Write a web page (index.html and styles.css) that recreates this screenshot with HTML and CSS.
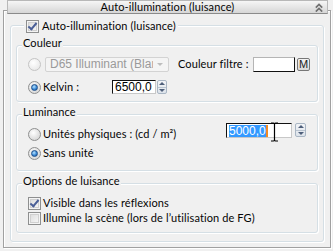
FILE: index.html
```html
<!DOCTYPE html>
<html lang="fr">

<head>
    <meta charset="UTF-8">
    <title>Auto-illumination (luisance)</title>
    <link rel="stylesheet" href="styles.css">
</head>

<body>
    <div class="rollout">
        <div class="rollout-title">
            <span>Auto-illumination (luisance)</span>
            <svg class="chevron" width="8" height="9" viewBox="0 0 8 9">
                <path d="M0.8 4.6 L4 1.4 L7.2 4.6 M0.8 8.6 L4 5.4 L7.2 8.6" fill="none" stroke="#707070" stroke-width="1.7"/>
            </svg>
        </div>

        <div class="group group-main">
            <div class="group-label label-main">
                <span class="check on"></span>
                <span class="check-text">Auto-illumination (luisance)</span>
            </div>

            <!-- Couleur -->
            <div class="group group-color">
                <div class="group-label">Couleur</div>
                <div class="row row-first">
                    <span class="radio off"></span>
                    <div class="combo">
                        <span class="combo-text">D65 Illuminant (Blanc</span>
                        <span class="combo-arrow"></span>
                    </div>
                    <span class="filter-label">Couleur filtre :</span>
                    <span class="swatch"></span>
                    <span class="m-button">M</span>
                </div>
                <div class="row row-kelvin">
                    <span class="radio on"></span>
                    <span class="kelvin-label">Kelvin :</span>
                    <span class="field field-kelvin">6500,0</span>
                    <span class="spinner"><span class="spin-up"></span><span class="spin-down"></span></span>
                </div>
            </div>

            <!-- Luminance -->
            <div class="group group-lum">
                <div class="group-label">Luminance</div>
                <div class="row row-phys">
                    <span class="radio"></span>
                    <span class="phys-label">Unités physiques : (cd / m²)</span>
                    <span class="field field-lum">
                        <span class="selected">5000,0</span>
                        <svg class="ibeam" width="9" height="20" viewBox="0 0 9 20">
                            <path d="M1 1 H3.5 Q4.5 1 4.5 2.5 V17.5 Q4.5 19 3.5 19 H1 M8 1 H5.5 Q4.5 1 4.5 2.5 M4.5 17.5 Q4.5 19 5.5 19 H8" fill="none" stroke="#000" stroke-width="1.2"/>
                        </svg>
                    </span>
                    <span class="spinner spinner-lum"><span class="spin-up"></span><span class="spin-down"></span></span>
                </div>
                <div class="row row-sans">
                    <span class="radio on"></span>
                    <span>Sans unité</span>
                </div>
            </div>

            <!-- Options de luisance -->
            <div class="group group-opts">
                <div class="group-label">Options de luisance</div>
                <div class="row row-check1">
                    <span class="check on"></span>
                    <span>Visible dans les réflexions</span>
                </div>
                <div class="row row-check2">
                    <span class="check"></span>
                    <span>Illumine la scène (lors de l’utilisation de FG)</span>
                </div>
            </div>
        </div>
    </div>
</body>

</html>
```

FILE: styles.css
```css
body {
    margin: 0;
    width: 333px;
    height: 251px;
    overflow: hidden;
    background: #f0f0f0;
    font-family: Lato, "Liberation Sans", sans-serif;
    font-size: 11px;
    letter-spacing: 0.1px;
    line-height: 14px;
    color: #050505;
}

/* outer rollout frame */
.rollout {
    margin: 10px 2px 0 3px;
    height: 238px;
    box-sizing: border-box;
    border: 1px solid #a0a0a0;
    box-shadow: inset 1px 1px 0 #fff, 1px 1px 0 #fff;
}

.rollout-title {
    display: flex;
    align-items: center;
    justify-content: center;
    position: relative;
    height: 14px;
    margin: -11px 2px 0 3px;
    box-sizing: border-box;
    border: 1px solid #b8b8b8;
    border-bottom-color: #8a8a8a;
    background: linear-gradient(#f6f6f6, #d6d6d6);
}

.rollout-title .chevron {
    position: absolute;
    right: 4px;
    top: 2px;
}

/* group boxes */
.group {
    border: 1px solid #d5dfe5;
    border-radius: 3px;
    box-shadow: inset 1px 1px 0 #fff, 1px 1px 0 #fff;
}

.group-label {
    display: flex;
    align-items: center;
    width: max-content;
    height: 14px;
    margin: -10px 0 0 5px;
    padding: 0 1px;
    background: #f0f0f0;
}

.group-main {
    margin: 11px 6px 0 6px;
    padding: 0 5px 8px 5px;
}

.label-main {
    margin: -7px 0 0 8px;
    padding: 0 2px;
}

.check-text {
    margin-left: 3px;
}

.group-color {
    margin-top: 12px;
    padding-bottom: 5px;
}

.group-lum {
    margin-top: 12px;
    padding-bottom: 10px;
}

.group-opts {
    margin-top: 12px;
    padding-bottom: 7px;
}

.row {
    display: flex;
    align-items: center;
    padding-left: 11px;
    height: 18px;
}

.row .radio,
.row .check {
    margin-right: 2px;
}

.row-first {
    margin-top: 5px;
}

.row-kelvin {
    margin-top: 5px;
}

.row-phys {
    align-items: flex-start;
    margin-top: 4px;
}

.row-phys .radio {
    margin-top: 5px;
}

.row-phys .phys-label {
    margin-top: 4px;
}

.row-sans {
    height: 14px;
    margin-top: 5px;
}

.row-check1 {
    height: 14px;
    margin-top: 8px;
}

.row-check2 {
    height: 14px;
    margin-top: 1px;
}

/* radio buttons */
.radio {
    display: flex;
    align-items: center;
    justify-content: center;
    flex: none;
    width: 13px;
    height: 13px;
    box-sizing: border-box;
    border: 1px solid #8e8f8f;
    border-radius: 50%;
    background: radial-gradient(circle at 40% 35%, #ffffff, #e2e2e2 55%, #cfcfcf);
}

.radio.off {
    border-color: #c4c4c4;
    background: radial-gradient(circle at 40% 35%, #ffffff, #eeeeee 60%, #e2e2e2);
}

.radio.on::after {
    content: "";
    width: 5px;
    height: 5px;
    border-radius: 50%;
    border: 1px solid #1f4f8a;
    background: radial-gradient(circle at 40% 35%, #b9e4ff, #3b8ad6 55%, #16509a);
}

/* check boxes */
.check {
    position: relative;
    flex: none;
    width: 13px;
    height: 13px;
    box-sizing: border-box;
    border: 1px solid #8e8f8f;
    background: linear-gradient(135deg, #d8d8d8, #fbfbfb);
    box-shadow: inset 0 0 0 1px #f4f4f4, inset 0 0 0 2px #d0d0d0;
}

.check.on::after {
    content: "";
    position: absolute;
    left: 3px;
    top: 0;
    width: 3px;
    height: 7px;
    border: solid #4a5f97;
    border-width: 0 2px 2px 0;
    transform: rotate(40deg);
}

/* disabled combo box */
.combo {
    display: flex;
    align-items: center;
    flex: none;
    width: 124px;
    height: 15px;
    margin-left: 2px;
    box-sizing: border-box;
    border: 1px solid #d3d3d3;
    border-radius: 2px;
    background: #f4f4f4;
    overflow: hidden;
}

.combo-text {
    flex: 1;
    padding-left: 4px;
    overflow: hidden;
    white-space: nowrap;
    font-family: "Liberation Sans", Arial, sans-serif;
    font-size: 12px;
    letter-spacing: 0;
    color: #9a9a9a;
}

.combo-arrow {
    flex: none;
    width: 0;
    height: 0;
    margin: 1px 5px 0 4px;
    border-left: 3px solid transparent;
    border-right: 3px solid transparent;
    border-top: 3px solid #bdbdbd;
}

.filter-label {
    flex: none;
    width: 75px;
    margin-left: 9px;
}

.swatch {
    flex: none;
    width: 42px;
    height: 15px;
    box-sizing: border-box;
    border: 1px solid #b5b5b5;
    border-right-color: #111;
    border-bottom-color: #111;
    background: #fff;
}

.m-button {
    display: flex;
    align-items: center;
    justify-content: center;
    flex: none;
    width: 13px;
    height: 13px;
    margin-left: 2px;
    box-sizing: border-box;
    border: 1px solid #777;
    border-radius: 2px;
    background: linear-gradient(#f3f3f3, #d9d9d9);
    font-family: "Liberation Sans", Arial, sans-serif;
    font-size: 11px;
    letter-spacing: 0;
    color: #222;
}

.kelvin-label {
    flex: none;
    width: 69px;
}

/* numeric fields */
.field {
    display: flex;
    align-items: center;
    flex: none;
    box-sizing: border-box;
    border: 1px solid #111;
    border-right-color: #c8c8c8;
    border-bottom-color: #c8c8c8;
    background: #fff;
    font-family: "Liberation Sans", Arial, sans-serif;
    font-size: 12px;
    letter-spacing: 0;
    color: #000;
}

.field-kelvin {
    width: 44px;
    height: 14px;
    padding-left: 2px;
}

.phys-label {
    flex: none;
    width: 183px;
}

.field-lum {
    position: relative;
    width: 66px;
    height: 15px;
    padding-left: 2px;
}

.selected {
    background: #3399ff;
    color: #fff;
    border-right: 2px solid #f08a24;
    line-height: 12px;
}

.ibeam {
    position: absolute;
    left: 43px;
    top: -2px;
}

/* spinners */
.spinner {
    display: flex;
    flex-direction: column;
    flex: none;
    width: 10px;
    height: 14px;
    margin-left: 1px;
    box-sizing: border-box;
    border: 1px solid #a9b6c4;
    border-radius: 2px;
    background: linear-gradient(#f2f4f7, #dde3ea);
}

.spinner-lum {
    margin-left: 3px;
    width: 11px;
}

.spin-up,
.spin-down {
    flex: 1;
    display: flex;
    align-items: center;
    justify-content: center;
}

.spin-down {
    border-top: 1px solid #b9c4d0;
}

.spin-up::after {
    content: "";
    border-left: 3px solid transparent;
    border-right: 3px solid transparent;
    border-bottom: 3px solid #4e5f7a;
}

.spin-down::after {
    content: "";
    border-left: 3px solid transparent;
    border-right: 3px solid transparent;
    border-top: 3px solid #4e5f7a;
}
```
